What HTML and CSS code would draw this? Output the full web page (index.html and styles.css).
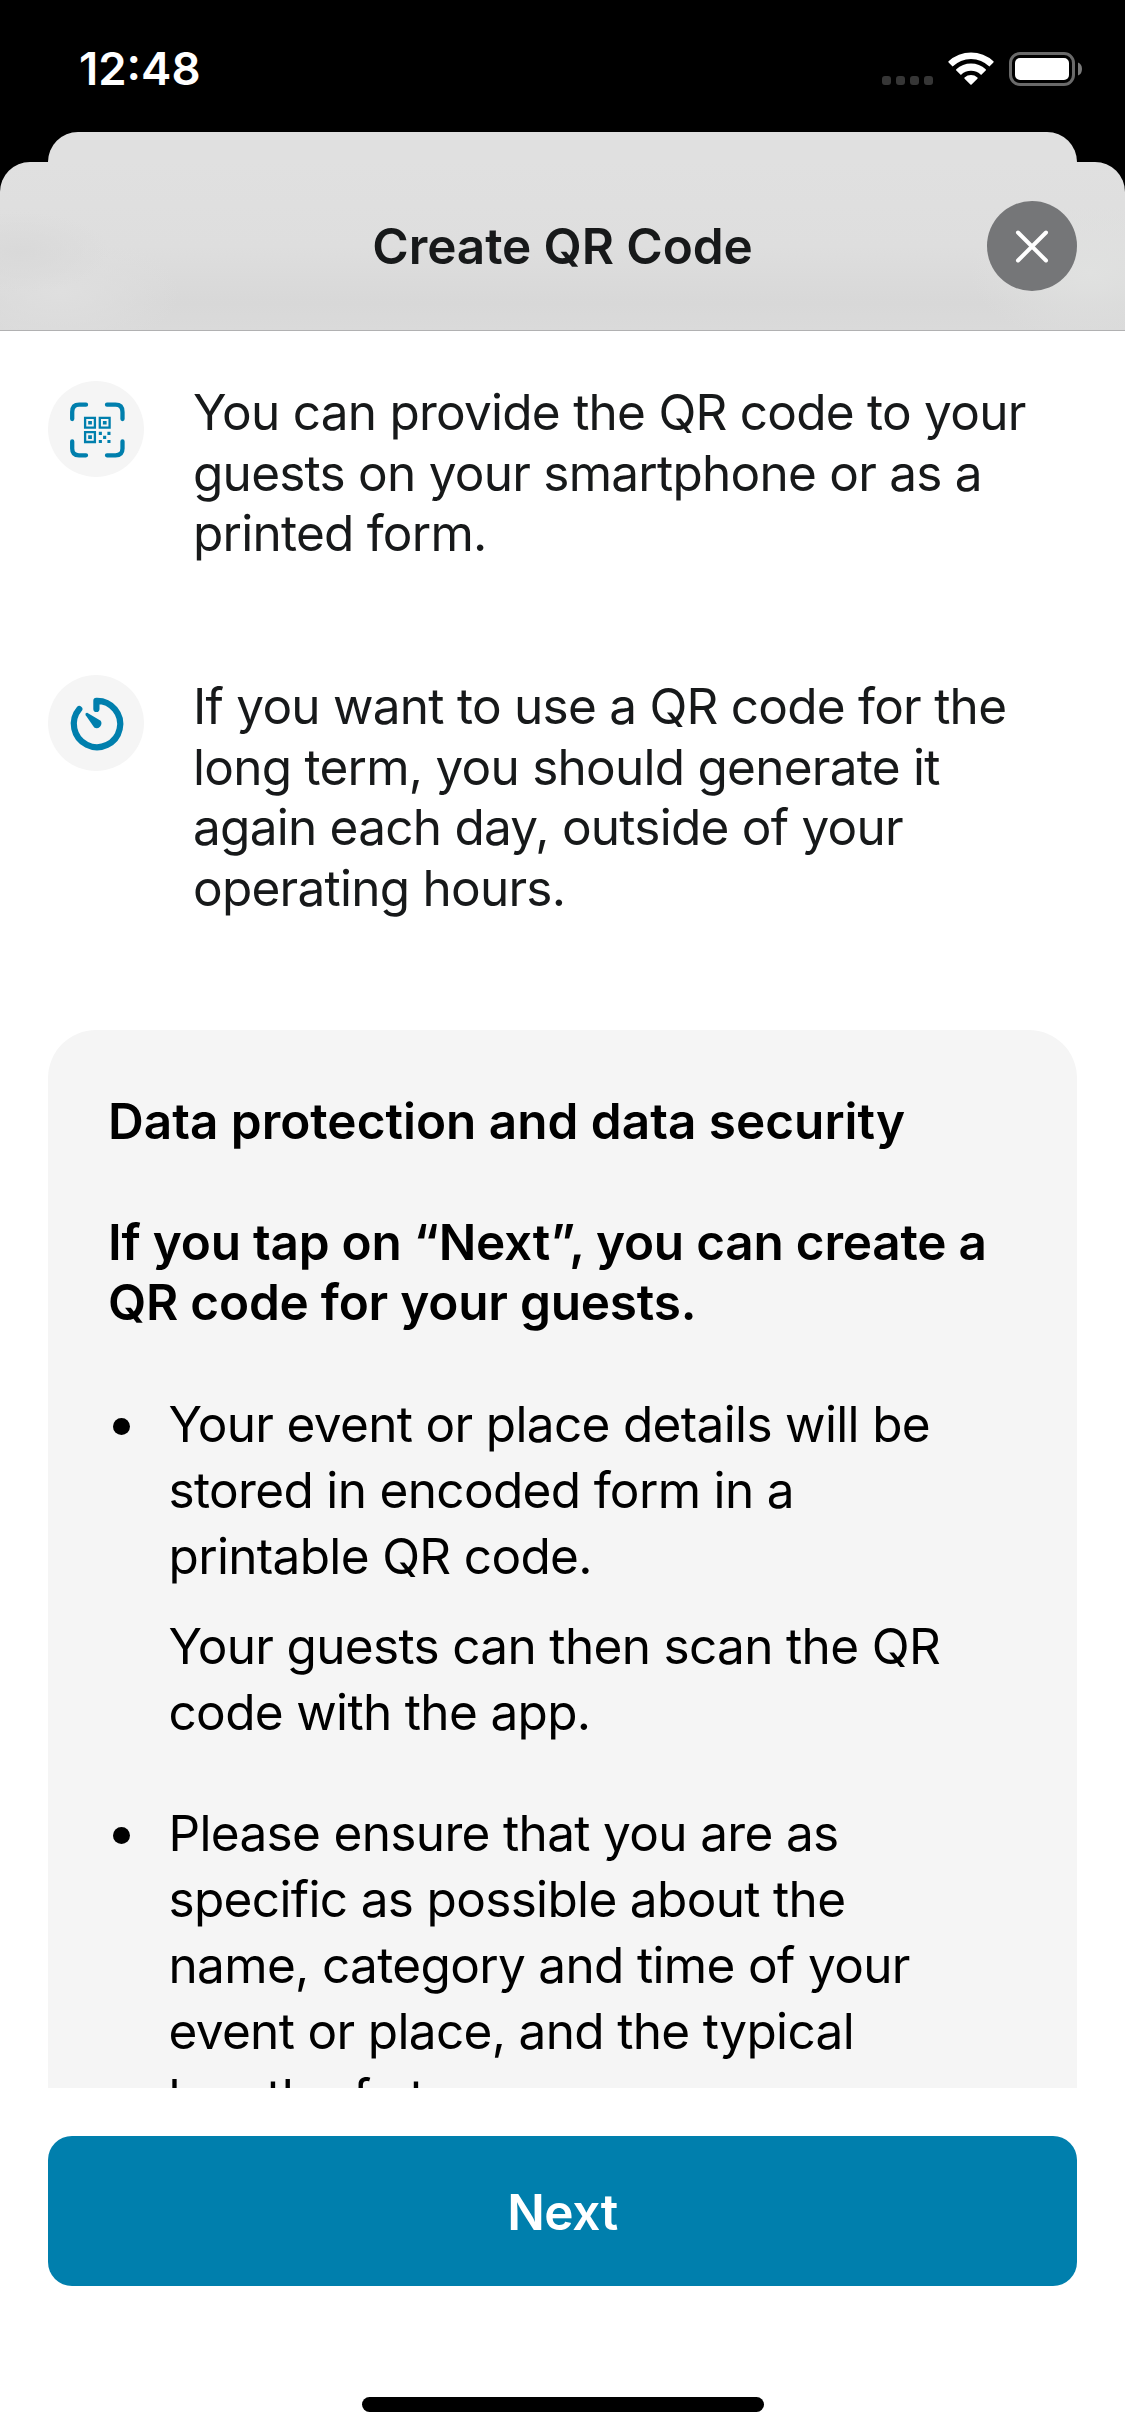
FILE: index.html
```html
<!DOCTYPE html>
<html lang="en">
<head>
<meta charset="utf-8">
<title>Create QR Code</title>
<link rel="stylesheet" href="styles.css">
</head>
<body>
<div class="screen">
  <header class="status">
    <span class="time">12:48</span>
    <div class="status-icons">
      <svg class="signal" viewBox="0 0 51 9"><rect width="9" height="9" rx="3"/><rect x="14" width="9" height="9" rx="3"/><rect x="28" width="9" height="9" rx="3"/><rect x="42" width="9" height="9" rx="3"/></svg>
      <svg class="wifi" viewBox="0 0 46 33"><path d="M.6 9.2A33 33 0 0 1 45.4 9.2Q46 9.8 45.4 10.5L41.4 14.6A26 26 0 0 0 4.6 14.6L.6 10.5Q0 9.8.6 9.2ZM8.3 17.2A21.7 21.7 0 0 1 37.7 17.2Q38.3 18 37.7 18.6L33.1 22.9A14.3 14.3 0 0 0 12.9 22.9L8.3 18.6Q7.7 18 8.3 17.2ZM16.6 25.4A10 10 0 0 1 29.4 25.4Q30 26 29.4 26.7L23.6 32.6Q23 33.1 22.4 32.6L16.6 26.7Q16 26 16.6 25.4Z"/></svg>
      <svg class="battery" viewBox="0 0 73 34"><rect x="1.5" y="1.5" width="63" height="31" rx="9.5" fill="none" stroke="#6a6a6a" stroke-width="3"/><rect x="6" y="6" width="54" height="22" rx="5" fill="#fff"/><path d="M69 10.5Q73 12 73 17T69 23.5Z" fill="#7a7a7a"/></svg>
    </div>
  </header>
  <div class="back-card"></div>
  <main class="sheet">
    <div class="nav">
      <h1 class="title">Create QR Code</h1>
      <button class="close" aria-label="Close"><svg viewBox="0 0 90 90"><path d="M31 31.5 59 59.5M59 31.5 31 59.5"/></svg></button>
    </div>
    <div class="scroll">
      <section class="info first">
        <svg class="badge" viewBox="0 0 96 96">
          <circle class="disc" cx="48" cy="48" r="48"/>
          <path class="line" stroke-width="4.3" d="M24.2 38V31Q24.2 23.7 31.2 23.7H38M59 23.7H67.5Q74.5 23.7 74.5 31V38M74.5 60.5V67.5Q74.5 74.3 67.5 74.3H59M38 74.3H31Q24.2 74.3 24.2 67.5V60.5"/>
          <path fill="none" stroke="#007fad" stroke-width="2.3" d="M37.1 36.8h9.8v9.8h-9.8ZM51.8 36.8h9.8v9.8h-9.8ZM37.1 51.2h9.8v9.8h-9.8Z"/>
          <path class="solid" d="M40.2 39.9h3.7v3.7h-3.7ZM54.9 39.9h3.7v3.7h-3.7ZM40.2 54.300h3.7v3.7h-3.7ZM50.8 50.8h3.100v3.100h-3.100ZM59.400 50.800h3.100v3.100h-3.100ZM55.100 54.800h3.100v3.100h-3.100ZM50.800 59h3.100v3.100h-3.100ZM59.400 59h3.100v3.100h-3.100Z"/>
        </svg>
        <p>You can provide the QR code to your<br>guests on your smartphone or as a<br>printed form.</p>
      </section>
      <section class="info">
        <svg class="badge" viewBox="0 0 96 96">
          <circle class="disc" cx="48" cy="48" r="48"/>
          <path class="line" stroke-width="6.2" d="M48.4 34V25.8A23.2 23.2 0 1 1 31.3 34"/>
          <path class="solid" d="M37.7 40.2Q36.7 37.8 39.2 37.7L52.7 45.8A4.9 4.9 0 0 1 46.2 52.6Z"/>
        </svg>
        <p>If you want to use a QR code for the<br>long term, you should generate it<br>again each day, outside of your<br>operating hours.</p>
      </section>
      <section class="legal">
        <h2 class="legal-title">Data protection and data security</h2>
        <h2 class="legal-lead">If you tap on “Next”, you can create a<br>QR code for your guests.</h2>
        <ul class="list">
          <li><p>Your event or place details will be<br>stored in encoded form in a<br>printable QR code.</p><p>Your guests can then scan the QR<br>code with the app.</p></li>
          <li><p>Please ensure that you are as<br>specific as possible about the<br>name, category and time of your<br>event or place, and the typical<br>length of stay.</p></li>
        </ul>
      </section>
    </div>
    <footer class="footer">
      <button class="next">Next</button>
      <div class="home"></div>
    </footer>
  </main>
</div>
</body>
</html>
```
FILE: styles.css
```css
* { box-sizing: border-box; margin: 0; padding: 0; }
body { font-family: Inter, "Liberation Sans", sans-serif; background: #000; }
button { border: 0; font: inherit; }
svg { display: block; }

.screen { width: 1125px; height: 2436px; display: flex; flex-direction: column; background: #000; overflow: hidden; }

/* Status bar */
.status { height: 132px; flex: none; display: flex; justify-content: space-between; align-items: flex-start; padding: 52px 43px 0 79px; color: #fff; }
.time { font-size: 45.5px; font-weight: 600; line-height: 34px; }
.status-icons { display: flex; align-items: flex-end; height: 34px; }
.signal { width: 51px; height: 9px; margin: 0 15px 1px 0; fill: #363636; }
.wifi { width: 46px; height: 33px; margin: 0 15px 1px 0; fill: #fff; }
.battery { width: 73px; height: 34px; }

/* Stacked sheets */
.back-card { flex: none; height: 60px; margin: 0 48px -30px; border-radius: 30px 30px 0 0; background: #e0e0e0; }
.sheet { flex: 1; min-height: 0; position: relative; display: flex; flex-direction: column; }
.nav {
  flex: none; height: 169px; display: grid; grid-template-columns: 1fr auto 1fr; align-items: center;
  padding: 0 48px; border-bottom: 1px solid #b1b1b2; border-radius: 30px 30px 0 0;
  background:
    radial-gradient(90px 40px at 20px 90px, #d9d9d9, transparent),
    radial-gradient(120px 60px at 60px 130px, #dfdfdf, transparent),
    radial-gradient(120px 70px at 1090px 110px, #e0e1e0, transparent),
    linear-gradient(#e0e0e0, #dedede 50%, #d8d8d8 84%, #dadada);
}
.title { grid-column: 2; font-size: 49.5px; font-weight: 600; letter-spacing: -0.1px; color: #17191a; white-space: nowrap; }
.close { justify-self: end; width: 90px; height: 90px; border-radius: 50%; background: #757678; }
.close path { fill: none; stroke: #fff; stroke-width: 4; stroke-linecap: round; }

/* Scrollable content */
.scroll { flex: none; height: 1757px; overflow: hidden; padding: 50px 48px 0; background: #fff; font-size: 49.5px; line-height: 60.67px; color: #17191a; white-space: nowrap; }
.info { display: flex; gap: 49px; height: 355px; letter-spacing: -0.75px; }
.info.first { height: 294px; }
.info p { padding-top: 1px; }
.badge { flex: none; width: 96px; height: 96px; }
.disc { fill: #f5f5f5; }
.line { fill: none; stroke: #007fad; stroke-linecap: round; stroke-linejoin: round; }
.solid { fill: #007fad; }

.legal { height: 1400px; padding: 61px 60px 0; border-radius: 48px; background: #f5f5f5; color: #000; }
.legal h2 { font-size: 49.5px; font-weight: 600; }
.legal-title { margin-bottom: 60px; }
.legal-lead { letter-spacing: -0.22px; }
.list { display: flex; flex-direction: column; gap: 55px; margin-top: 58px; list-style: none; line-height: 66px; letter-spacing: -0.66px; }
.list li { display: grid; row-gap: 24px; padding-left: 60.5px; position: relative; }
.list li::before { content: ""; position: absolute; left: 4.5px; top: 27px; width: 17px; height: 17px; border-radius: 50%; background: #000; }

/* Bottom action */
.footer { flex: 1; display: flex; flex-direction: column; align-items: center; justify-content: space-between; padding: 48px 48px 24px; background: #fff; }
.next { width: 100%; height: 150px; padding-top: 2px; border-radius: 24px; background: #007fad; color: #fff; font-size: 49.5px; font-weight: 600; letter-spacing: -0.4px; }
.home { width: 402px; height: 15px; border-radius: 8px; background: #000; }
```
